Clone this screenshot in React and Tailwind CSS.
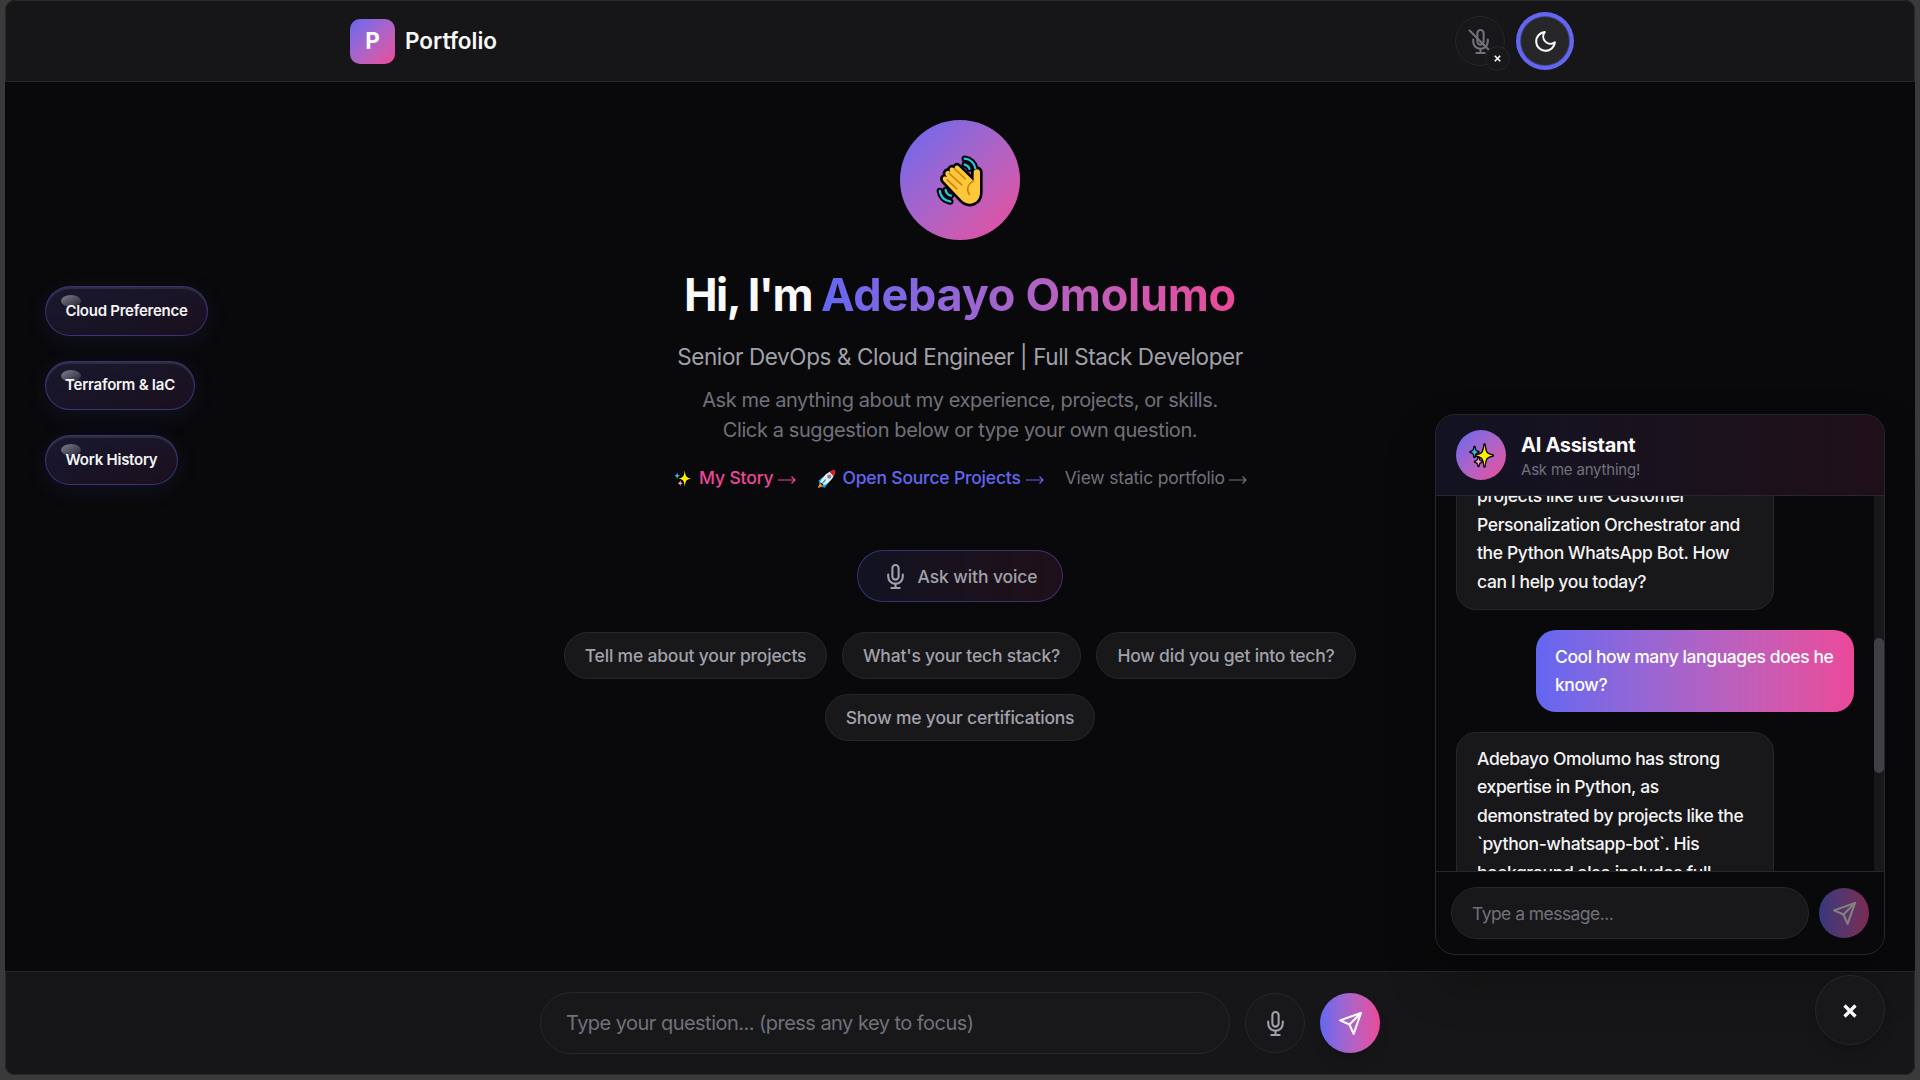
import React, { useState } from "react";
import { FiMic, FiMoon, FiSend } from "react-icons/fi";

const TOPICS = [
  { label: "Cloud Preference", size: "w-[163px] h-[50px]" },
  { label: "Terraform & IaC", size: "w-[150px] h-[49px]" },
  { label: "Work History", size: "w-[133px] h-[50px]" },
];

const SUGGESTIONS = [
  { label: "Tell me about your projects", width: "w-[263px]" },
  { label: "What's your tech stack?", width: "w-[239px]" },
  { label: "How did you get into tech?", width: "w-[260px]" },
  { label: "Show me your certifications", width: "w-[270px]" },
];

function WaveHand() {
  return (
    <svg viewBox="0 0 48 52" className="w-[51px] h-[55px]" fill="none" strokeLinecap="round" strokeLinejoin="round">
      <g stroke="#000" strokeWidth="6">
        <path d="M27 3.500c5 .5 9 4 10 9M27 9c2.500.5 4 2 4.500 4M3.500 34c.5 5 4 9 10 10M9 33c.5 3 2.500 5 5 5.500" />
      </g>
      <path
        d="M21 10.500c-2-1.500-4.500 1-3 3l-1-1c-3-2-5.500 1-3.500 3.500l-1-.5c-3-1.500-5 1.500-3 4l1 1.500c-3-2-5.500.5-3.500 3.500L24 42.500c7 7 17.500 3 17.500-7V16c0-3.500-6-3.500-6 0v8.500Z"
        fill="#ffc83d"
        stroke="#000"
        strokeWidth="5"
      />
      <path
        d="M21 10.500c-2-1.500-4.500 1-3 3l-1-1c-3-2-5.500 1-3.500 3.500l-1-.5c-3-1.500-5 1.500-3 4l1 1.500c-3-2-5.500.5-3.500 3.500L24 42.500c7 7 17.500 3 17.500-7V16c0-3.500-6-3.500-6 0v8.500Z"
        fill="#ffc83d"
      />
      <path d="m18 13.500 9.500 9M12.500 17.500 24 28M10.500 23.500l9 8.500M35.500 24.500c-6 3-7 8-4 13" stroke="#d67d00" strokeWidth="1.500" />
      <g stroke="#26c6e5" strokeWidth="2.200">
        <path d="M27 3.500c5 .5 9 4 10 9M27 9c2.500.5 4 2 4.500 4M3.500 34c.5 5 4 9 10 10M9 33c.5 3 2.500 5 5 5.500" />
      </g>
    </svg>
  );
}

function Sparkles({ className }) {
  return (
    <svg viewBox="0 0 25 25" className={className} strokeLinejoin="round" stroke="#000" strokeWidth="2.500" paintOrder="stroke">
      <path d="M15.500 1.500c1 8 1.500 9.500 8.500 11-7 1.500-7.500 3-8.500 11-1-8-1.500-9.500-8.500-11 7-1.500 7.500-3 8.500-11Z" fill="#fff100" />
      <path d="M5.500 4c.5 3.500 1 4.300 4 5-3 .7-3.500 1.500-4 5-.5-3.500-1-4.300-4-5 3-.7 3.500-1.500 4-5Z" fill="#26c6e5" />
      <path d="M9.500 14.500c.5 3 1 3.500 3.500 4.200-2.500.6-3 1.300-3.500 4.300-.5-3-1-3.700-3.500-4.300 2.500-.7 3-1.200 3.500-4.200Z" fill="#ff9fc5" />
    </svg>
  );
}

function Rocket() {
  return (
    <svg viewBox="0 0 24 24" className="w-[19px] h-[20px] shrink-0">
      <path d="M3.500 17 1 23.500 8 21Z" fill="#ff8a1f" />
      <path d="m8 9-6 5 1 5 6-5ZM15 16l-5 7-4-1 4-7Z" fill="#0f9bd8" />
      <path d="M9 20 4 15.500C8 8 14 2 23 1c-.5 8-6 15-14 19Z" fill="#eceef4" />
      <path d="M16 3c2-1.200 4-2 7-2-.2 3-1 5.500-2.300 7.500Z" fill="#e8121d" />
      <circle cx="15.500" cy="9" r="2.700" fill="#7b8798" />
      <path d="m7 17.500 4-5" stroke="#0f9bd8" strokeWidth="1.800" />
    </svg>
  );
}

function Cross({ className }) {
  return (
    <svg viewBox="0 0 14 14" className={className} stroke="#fafafa" strokeWidth="3.200">
      <path d="m1.500 1.500 11 11M12.500 1.500l-11 11" />
    </svg>
  );
}

function Arrow() {
  return (
    <svg viewBox="0 0 18 12" className="w-[18px] h-3 shrink-0 mt-0.5" fill="none" stroke="currentColor" strokeWidth="1.200">
      <path d="M0 6h17M13.500 2.500 17 6l-3.500 3.500" />
    </svg>
  );
}

function Header() {
  return (
    <header className="h-[82px] shrink-0 bg-[#161618] border border-[#27272a] rounded-t-[10px]">
      <div className="w-[1220px] h-full mx-auto flex items-center justify-between">
        <div className="flex items-center gap-[10px]">
          <div className="w-[45px] h-[45px] rounded-[10px] bg-linear-to-br from-[#6366f1] to-[#ec4899] flex items-center justify-center text-white font-bold text-[22.500px]">
            P
          </div>
          <span className="text-[22.500px] font-semibold">Portfolio</span>
        </div>
        <div className="flex items-center gap-[15px]">
          <button className="relative w-[50px] h-[50px] rounded-full bg-[#18181b] border border-[#27272a] flex items-center justify-center text-[#71717a]">
            <span className="relative">
              <FiMic className="w-[25px] h-[25px]" />
              <svg viewBox="0 0 24 24" className="absolute inset-0 w-[25px] h-[25px]" stroke="currentColor" strokeWidth="2" strokeLinecap="round">
                <path d="m1.500 1.500 21 21" />
              </svg>
            </span>
            <span className="absolute -right-[6px] -bottom-[6px] w-[25px] h-[25px] rounded-full bg-[#18181b] border border-[#27272a] flex items-center justify-center">
              <Cross className="w-[7px] h-[7px]" />
            </span>
          </button>
          <button className="w-[50px] h-[50px] rounded-full bg-[#27272a] border border-[#6366f1]/50 ring-4 ring-[#6366f1] flex items-center justify-center">
            <FiMoon className="w-[25px] h-[25px]" />
          </button>
        </div>
      </div>
    </header>
  );
}

function Hero() {
  return (
    <main className="flex-1 min-h-0 flex flex-col items-center pt-[38px]">
      <div className="w-[120px] h-[120px] shrink-0 rounded-full bg-linear-to-br from-[#6366f1] to-[#ec4899] flex items-center justify-center pl-[3px] pt-[4px]">
        <WaveHand />
      </div>
      <h1 className="mt-[30px] h-[50px] leading-[50px] text-[45px] font-bold tracking-[-1.600px] whitespace-nowrap">
        Hi, I'm{" "}
        <span className="bg-linear-to-r from-[#6366f1] to-[#ec4899] bg-clip-text text-transparent tracking-[-0.250px]">Adebayo Omolumo</span>
      </h1>
      <p className="mt-[20px] h-[35px] leading-[34px] text-[22.500px] text-[#a1a1aa] tracking-[-0.400px] whitespace-nowrap">
        Senior DevOps &amp; Cloud Engineer | Full Stack Developer
      </p>
      <p className="mt-[10px] leading-[30px] text-[20px] text-[#71717a] text-center tracking-[-0.400px] whitespace-nowrap">
        Ask me anything about my experience, projects, or skills.
        <br />
        Click a suggestion below or type your own question.
      </p>
      <div className="mt-[21px] h-[25px] flex items-center gap-[21px] text-[17.500px] whitespace-nowrap">
        <a href="#" className="flex items-center text-[#ec4899] font-medium tracking-[-0.150px]">
          <Sparkles className="w-[19px] h-[19px]" />
          <span className="ml-[7px] mr-[5px]">My Story</span>
          <Arrow />
        </a>
        <a href="#" className="flex items-center text-[#6366f1] font-medium tracking-[-0.180px]">
          <Rocket />
          <span className="ml-[6px] mr-[5px]">Open Source Projects</span>
          <Arrow />
        </a>
        <a href="#" className="flex items-center text-[#71717a] tracking-[-0.180px]">
          <span className="mr-[4px]">View static portfolio</span>
          <Arrow />
        </a>
      </div>
      <button className="mt-[59px] w-[206px] h-[52px] shrink-0 rounded-full border border-[#6366f1]/40 bg-linear-to-r from-[#6366f1]/10 to-[#ec4899]/10 flex items-center justify-center gap-[10px] text-[17.500px] font-medium text-[#a1a1aa] tracking-[-0.100px]">
        <FiMic className="w-[25px] h-[25px]" />
        <span className="pt-0.5">Ask with voice</span>
      </button>
      <div className="mt-[30px] w-[820px] flex flex-wrap justify-center gap-[15px]">
        {SUGGESTIONS.map((s) => (
          <button key={s.label} className={`${s.width} h-[47px] pt-0.5 rounded-full bg-[#18181b] border border-[#27272a] text-[17.500px] font-medium text-[#a1a1aa] tracking-[-0.200px] whitespace-nowrap`}>
            {s.label}
          </button>
        ))}
      </div>
    </main>
  );
}

function Topics() {
  return (
    <div className="absolute left-[45px] top-[286px] flex flex-col gap-[25px]">
      {TOPICS.map((t) => (
        <button
          key={t.label}
          className={`${t.size} relative rounded-[25px] border border-[#6366f1]/40 bg-linear-to-br from-[#18182f] to-[#1a101e] text-[15px] font-semibold text-[#f4f4f5] tracking-[-0.250px] whitespace-nowrap shadow-[0_5px_25px_rgba(99,102,241,0.1),inset_0_2px_1px_rgba(255,255,255,0.1)]`}
        >
          <span className="absolute left-[15px] top-[8px] w-[20px] h-[12px] rounded-[50%] bg-linear-to-br from-white/45 to-white/5" />
          <span className="relative">{t.label}</span>
        </button>
      ))}
    </div>
  );
}

function ChatPanel({ message, setMessage }) {
  return (
    <section className="absolute left-[1435px] top-[414px] w-[450px] h-[541px] rounded-[20px] border border-[#27272a] bg-[#09090b] overflow-hidden flex flex-col shadow-[0_25px_50px_rgba(0,0,0,0.25)]">
      <div className="h-[81px] shrink-0 border-b border-[#27272a] bg-linear-to-r from-[#6366f1]/10 to-[#ec4899]/10 flex items-center px-5 gap-[15px]">
        <div className="w-[50px] h-[50px] rounded-full bg-linear-to-br from-[#6366f1] to-[#ec4899] flex items-center justify-center">
          <Sparkles className="w-[25px] h-[25px]" />
        </div>
        <div className="pt-[3px]">
          <h3 className="text-[20px] leading-[25px] font-bold tracking-[-0.300px]">AI Assistant</h3>
          <p className="text-[15px] leading-[23px] text-[#71717a] tracking-[-0.200px]">Ask me anything!</p>
        </div>
      </div>
      <div className="flex-1 min-h-0 flex">
        <div className="flex-1 min-w-0 overflow-hidden flex flex-col justify-start gap-5 px-5 text-[17.500px] leading-[28.440px] font-medium tracking-[-0.380px] whitespace-nowrap">
          {/* oldest message is scrolled partly out of view */}
          <div className="-mt-[31px] w-[318px] h-[145px] shrink-0 self-start flex flex-col justify-end rounded-[20px] border border-[#27272a] bg-[#18181b] px-5 pb-[13px] text-[#f4f4f5]">
            <p>projects like the Customer</p>
            <p>Personalization Orchestrator and</p>
            <p>the Python WhatsApp Bot. How</p>
            <p>can I help you today?</p>
          </div>
          <div className="w-[318px] h-[82px] shrink-0 self-end rounded-[20px] bg-linear-to-r from-[#6366f1] to-[#ec4899] px-[19px] pt-[13px] text-white tracking-[-0.420px]">
            <p>Cool how many languages does he</p>
            <p>know?</p>
          </div>
          <div className="w-[318px] h-[200px] shrink-0 self-start rounded-[20px] border border-[#27272a] bg-[#18181b] px-5 pt-[12px] text-[#f4f4f5]">
            <p>Adebayo Omolumo has strong</p>
            <p>expertise in Python, as</p>
            <p>demonstrated by projects like the</p>
            <p>`python-whatsapp-bot`. His</p>
            <p>background also includes full</p>
          </div>
        </div>
        <div className="w-[10px] shrink-0 bg-[#18181b] pt-[142px]">
          <div className="h-[135px] rounded-full bg-[#3f3f46]" />
        </div>
      </div>
      <div className="h-[83px] shrink-0 border-t border-[#27272a] flex items-center px-[15px] gap-[10px]">
        <input
          value={message}
          onChange={(e) => setMessage(e.target.value)}
          placeholder="Type a message..."
          className="w-[358px] h-[52px] rounded-full bg-[#18181b] border border-[#27272a] px-5 text-[17.500px] tracking-[-0.550px] placeholder:text-[#71717a] outline-none"
        />
        <button className="w-[50px] h-[50px] shrink-0 rounded-full bg-linear-to-r from-[#6366f1] to-[#ec4899] opacity-50 flex items-center justify-center">
          <FiSend className="w-[25px] h-[25px]" />
        </button>
      </div>
    </section>
  );
}

function App() {
  const [question, setQuestion] = useState("");
  const [message, setMessage] = useState("");

  return (
    <div className="relative w-[1920px] h-[1080px] overflow-hidden bg-[#3a3a3a] px-[5px] pb-[5px] font-['Inter','Liberation_Sans',sans-serif] text-[#fafafa]">
      <div className="h-full rounded-[10px] overflow-hidden bg-[#09090b] flex flex-col">
        <Header />
        <Hero />
        <footer className="h-[104px] shrink-0 bg-[#161618] border border-[#27272a] rounded-b-[10px] flex items-center justify-center gap-[15px]">
          <input
            value={question}
            onChange={(e) => setQuestion(e.target.value)}
            placeholder="Type your question... (press any key to focus)"
            className="w-[690px] h-[62px] rounded-full bg-[#18181b] border border-[#27272a] px-[25px] text-[20px] tracking-[-0.530px] placeholder:text-[#71717a] outline-none"
          />
          <button className="w-[60px] h-[60px] rounded-full bg-[#18181b] border border-[#27272a] text-[#a1a1aa] flex items-center justify-center">
            <FiMic className="w-[25px] h-[25px]" />
          </button>
          <button className="w-[60px] h-[60px] rounded-full bg-linear-to-r from-[#6366f1] to-[#ec4899] text-white flex items-center justify-center shadow-lg">
            <FiSend className="w-[25px] h-[25px]" />
          </button>
        </footer>
      </div>
      <Topics />
      <ChatPanel message={message} setMessage={setMessage} />
      <button className="absolute left-[1815px] top-[975px] w-[70px] h-[70px] rounded-full bg-[#18181b] border border-[#27272a] shadow-lg flex items-center justify-center pt-0.5">
        <Cross className="w-[14px] h-[14px]" />
      </button>
    </div>
  );
}

export default App;
